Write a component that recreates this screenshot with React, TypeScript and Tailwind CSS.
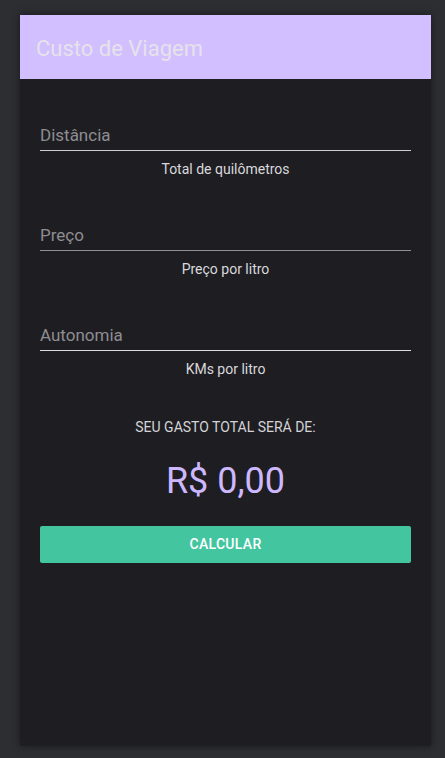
import React from "react";

function Field({ label, helper, line }: { label: string; helper: string; line: string }) {
  return (
    <div className="flex flex-col">
      <div className={`h-[28px] flex items-start border-b ${line}`}>
        <span className="text-[17px] leading-[24px] text-[#8e8d92]">{label}</span>
      </div>
      <div className="mt-[8px] text-center text-[14px] leading-[20px] text-[#d9d8dc]">{helper}</div>
    </div>
  );
}

export default function App() {
  return (
    <div
      className="w-[445px] h-[758px] bg-[#2c2e32] pt-[15px] px-[20px]"
      style={{ fontFamily: "Roboto, 'Noto Sans', sans-serif" }}
    >
      <div className="w-[411px] h-[731px] bg-[#1e1e22] flex flex-col shadow-[0_0_8px_rgba(0,0,0,0.45)]">
        <div className="h-[64px] bg-[#d2bfff] flex items-center pl-[16px] pt-[3px]">
          <span className="text-[22px] text-[#e6e2ea]">Custo de Viagem</span>
        </div>
        <div className="flex flex-col px-[20px] pt-[44px]">
          <Field label="Distância" helper="Total de quilômetros" line="border-[#cfcdd3]" />
          <div className="h-[44px]" />
          <Field label="Preço" helper="Preço por litro" line="border-[#908f94]" />
          <div className="h-[44px]" />
          <Field label="Autonomia" helper="KMs por litro" line="border-[#dedce2]" />
          <div className="mt-[38px] text-center text-[14px] leading-[20px] text-[#d4d3d8]">
            SEU GASTO TOTAL SERÁ DE:
          </div>
          <div className="mt-[23px] text-center text-[36px] leading-[42px] text-[#cdb8ff]">R$ 0,00</div>
          <button className="mt-[24px] h-[37px] w-full rounded-[2px] bg-[#43c69f] text-white text-[14px] font-medium tracking-[0.3px]">
            CALCULAR
          </button>
        </div>
      </div>
    </div>
  );
}
